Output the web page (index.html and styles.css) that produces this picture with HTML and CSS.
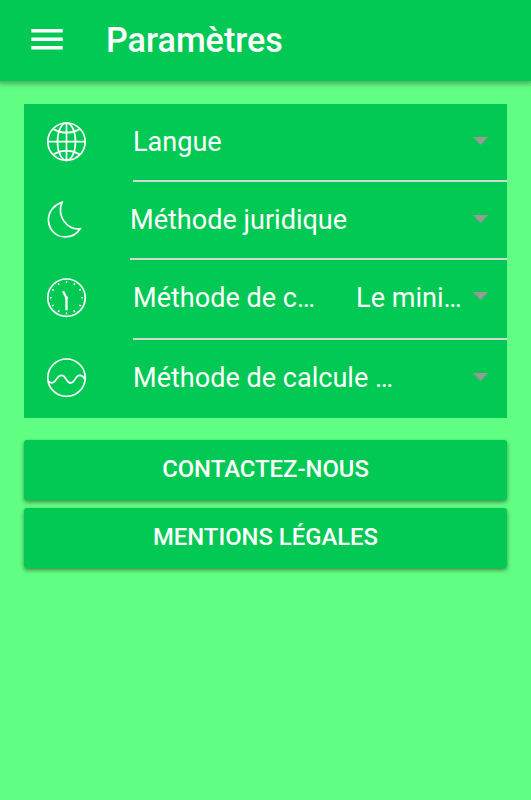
FILE: index.html
```html
<!DOCTYPE html>
<html lang="fr">
<head>
<meta charset="utf-8">
<title>Paramètres</title>
<link rel="stylesheet" href="styles.css">
</head>
<body>
<header class="toolbar">
  <svg class="menu" viewBox="0 0 32 22"><path d="M.3 0h31.400v3.600H.3zM.3 8.500h31.400v3.600H.3zM.3 17h31.400v3.600H.3z"/></svg>
  <h1>Paramètres</h1>
</header>
<main>
  <section class="list">
    <div class="row">
      <svg class="icon" viewBox="0.5 0.3 40 40"><circle cx="20" cy="20" r="18.700"/><ellipse cx="20" cy="20" rx="9" ry="18.700"/><path d="M20 1.300v37.400M1.300 20h37.400M6.500 7.200q13.500 7.600 27 0M6.500 32.800q13.500-7.600 27 0"/></svg>
      <div class="field"><span class="label">Langue</span><svg class="arrow" viewBox="0 0 15 8"><path d="M0 0h15L7.500 8z"/></svg></div>
    </div>
    <div class="row juridique">
      <svg class="icon" viewBox="0.5 0.3 40 40"><path d="M15.500 2.700C6.800 5.500 1.400 13 2 21.200C2.700 30.800 10 37.200 18.500 37.200C25.500 37.200 31 33.500 33.600 29.100C27.800 29.800 21.500 26.900 17.500 21.500C13.700 16.500 12.600 9 15.500 2.700Z"/></svg>
      <div class="field"><span class="label">Méthode juridique</span><svg class="arrow" viewBox="0 0 15 8"><path d="M0 0h15L7.500 8z"/></svg></div>
    </div>
    <div class="row calcul">
      <svg class="icon" viewBox="0.5 0.3 40 40"><circle cx="20" cy="20" r="18.700"/><circle class="ticks" cx="20" cy="20" r="15.600" pathLength="120"/><path class="hands" d="M16.500 13.500L20 20.300V32.500"/><circle class="pin" cx="20" cy="20.300" r="1.700"/></svg>
      <div class="field"><span class="label">Méthode de c…</span><span class="value">Le mini…</span><svg class="arrow" viewBox="0 0 15 8"><path d="M0 0h15L7.500 8z"/></svg></div>
    </div>
    <div class="row last">
      <svg class="icon" viewBox="0.5 0.3 40 40"><circle cx="20" cy="20" r="18.700"/><path d="M1.700 23.500C4 25.700 7 25.700 8.800 23C10.800 20 12 17.700 15 17.700C19.800 17.700 19.500 25.300 24.300 25.300C28.800 25.300 28.500 17.700 33 17.700C35.300 17.700 37 19 38.300 21.500"/></svg>
      <div class="field"><span class="label">Méthode de calcule …</span><svg class="arrow" viewBox="0 0 15 8"><path d="M0 0h15L7.500 8z"/></svg></div>
    </div>
  </section>
  <button class="button">CONTACTEZ-NOUS</button>
  <button class="button">MENTIONS LÉGALES</button>
</main>
</body>
</html>
```
FILE: styles.css
```css
* { box-sizing: border-box; }
body {
  margin: 0;
  min-height: 800px;
  background: #60ff83;
  color: #fff;
  font-family: Roboto, sans-serif;
}
.toolbar {
  display: flex;
  align-items: center;
  height: 81px;
  padding: 0 31px;
  background: #02c953;
  box-shadow: 0 1px 5px 2px rgba(50, 70, 50, .45);
}
.menu { width: 32px; height: 22px; fill: #fff; margin-top: -1px; }
h1 {
  margin: 0 0 2px 43px;
  font-size: 34.150px;
  line-height: 40px;
  font-weight: 500;
}
main { padding: 22.500px 24px 0; }
.list { height: 314px; margin-bottom: 22.500px; background: #02c953; }
.row { display: flex; height: 78px; padding-left: 23px; }
.icon {
  width: 40px;
  height: 40px;
  margin: 18px 45.500px 0 0;
  fill: none;
  stroke: #fff;
  stroke-width: 1.700;
  flex: none;
}
.field {
  display: flex;
  align-items: center;
  flex: 1;
  min-width: 0;
  padding: 0 19px 0 0;
  border-bottom: 2px solid #d2d8d3;
  font-size: 27.070px;
  line-height: 34px;
  white-space: nowrap;
}
.label { margin-left: .5px; }
.arrow { width: 15px; height: 8px; margin: 0 0 2px auto; fill: #999; }
.juridique .icon { margin-right: 42.500px; }
.calcul { height: 80px; }
.calcul .field { padding-bottom: 2px; }
.value { margin-left: 41px; }
.calcul .arrow { margin-bottom: 4px; }
.last .field { border-bottom-color: transparent; }
.ticks { stroke-width: 1.800; stroke-dasharray: 1.800 8.200; stroke-dashoffset: .9; }
.hands { stroke-width: 2.300; }
.pin { fill: #fff; stroke: none; }
.button {
  display: block;
  width: 100%;
  height: 60px;
  margin: 0 0 8px;
  padding: 0 0 3px;
  border: 0;
  border-radius: 3px;
  background: #02c953;
  box-shadow: 0 2px 4px rgba(30, 60, 30, .6);
  color: #fff;
  font: 500 23.850px/28px Roboto, sans-serif;
}
```
